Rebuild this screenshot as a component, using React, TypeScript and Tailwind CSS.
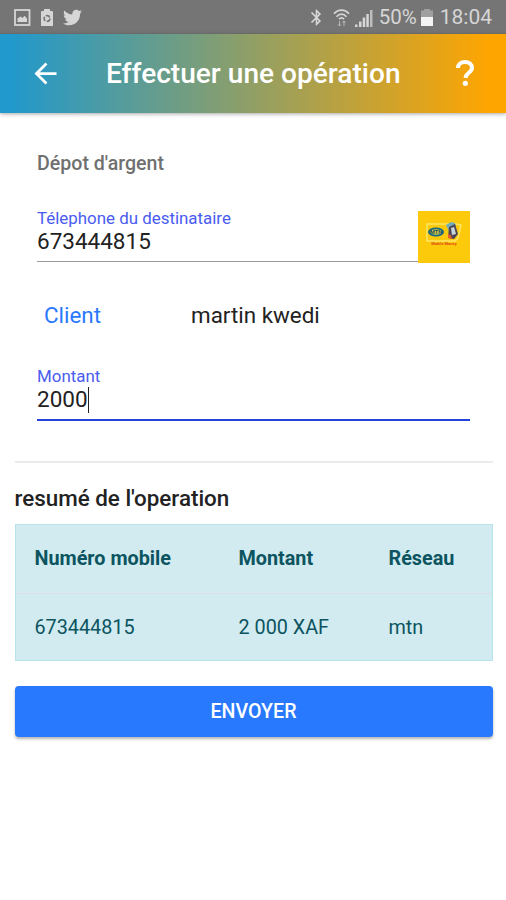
import { FaTwitter } from "react-icons/fa";
import { MdArrowBack, MdBluetooth } from "react-icons/md";

interface Operation {
  phone: string;
  amount: string;
  network: string;
}

const operations: Operation[] = [
  { phone: "673444815", amount: "2 000 XAF", network: "mtn" },
];

function StatusBar() {
  return (
    <div className="flex h-[34px] items-center justify-between bg-[#757575] pt-px pr-[14px] pl-[14px] text-[#d6d6d6]">
      <div className="flex items-center">
        <svg width="17" height="17" viewBox="0 0 17 17" fill="none">
          <rect x="1" y="1" width="14.5" height="15" stroke="currentColor" strokeWidth="1.8" />
          <path d="M3.5 13V9.5l3-2 2 1.5 2-2.2 2.500 2.700V13z" fill="currentColor" />
        </svg>
        <svg className="ml-[10px]" width="12" height="17" viewBox="0 0 12 17">
          <path d="M3 0h6v2h2.2l.8.8V17H0V2.8L.8 2H3z" fill="currentColor" />
          <circle cx="6" cy="9.5" r="2.9" fill="none" stroke="#757575" strokeWidth="1.6" strokeDasharray="4.6 1.47" />
        </svg>
        <FaTwitter className="ml-[10px]" size={19} />
      </div>
      <div className="flex items-center">
        <MdBluetooth size={19} />
        <svg className="ml-[7px]" width="17" height="18" viewBox="0 0 17 18" fill="none" stroke="currentColor" strokeWidth="1.7">
          <path d="M1 4.800C5-.2 12-.2 16 4.800M3.500 7.700c3-3.400 7-3.400 10 0M6 10.200c1.500-1.500 3.500-1.500 5 0" />
          <path d="M6.500 12v5M5 15.500 6.500 17 8 15.500M11 17v-5M9.500 13.500 11 12l1.500 1.500" strokeWidth="1" opacity=".7" />
        </svg>
        <svg className="ml-[5px]" width="18" height="18" viewBox="0 0 18 18" fill="currentColor">
          <path d="M0 15.500h2.500V18H0zM4 12.500h2.500V18H4zM7.700 8.500h2.500V18H7.700zM11.300 5h2.500v13h-2.500z" />
          <path d="M15 1h2.500v17H15z" opacity=".75" />
        </svg>
        <span className="ml-[6px] text-[20.5px] leading-[33px]">50%</span>
        <svg className="ml-[4px]" width="12" height="17" viewBox="0 0 12 17">
          <path d="M3 0h6v1.500h3V8H0V1.500h3z" fill="#a0a0a0" />
          <path d="M0 8h12v9H0z" fill="#f4f4f4" />
        </svg>
        <span className="ml-[7px] text-[21px] leading-[33px]">18:04</span>
      </div>
    </div>
  );
}

function Header() {
  return (
    <header className="flex h-[79px] items-center bg-[linear-gradient(to_right,#2199cc_2%,#ffa500_97%)] pl-[29px] text-white shadow-[0_1px_4px_rgba(0,0,0,0.35)]">
      <MdArrowBack size={33} />
      <h1 className="ml-[44px] text-[28.1px] leading-[36px] font-medium whitespace-nowrap">
        Effectuer une opération
      </h1>
      <svg className="mr-[32px] -mt-[2px] ml-auto" width="18" height="26" viewBox="0 0 18 26" fill="none">
        <path
          d="M2 8C2 4 5 2 9 2s7 2.300 7 6c0 4.500-6 4.500-6.500 10"
          stroke="currentColor"
          strokeWidth="4"
        />
        <circle cx="9.3" cy="23.3" r="2.6" fill="currentColor" />
      </svg>
    </header>
  );
}

function OperatorLogo() {
  return (
    <svg width="52" height="52" viewBox="0 0 52 52">
      <rect width="52" height="52" fill="#fdca0b" />
      <path d="M9 13h29l5 1-3 13-3 3H9z" fill="#fdca0b" stroke="#ffe566" strokeWidth="1.5" />
      <ellipse cx="18" cy="21" rx="8" ry="4.5" fill="#176a87" />
      <ellipse cx="18" cy="21" rx="6" ry="2.8" fill="#e0cb3c" />
      <text x="18" y="23" textAnchor="middle" fontSize="5.5" fontWeight="700" fill="#174e67">MTN</text>
      <path d="m28 14 5-3 4 1 1 5-7 3z" fill="#70adb8" />
      <path d="m31 16 6-3 3 10-4 5-6-1z" fill="#4c4555" />
      <path d="m33 17 3-1 2 7-4 1z" fill="#c9d6dc" />
      <path d="m30 23 3 1 1 4-4-1z" fill="#e1602d" />
      <text x="26" y="34" textAnchor="middle" fontSize="4" fontWeight="700" fill="#df4617">Mobile Money</text>
    </svg>
  );
}

export default function App() {
  return (
    <div className="min-h-[900px] w-[506px] bg-white font-[Roboto,sans-serif] text-[#222]">
      <StatusBar />
      <Header />

      <main className="pr-[13.5px] pl-[14.5px]">
        <section className="px-[22.5px] pt-[37px]">
          <h2 className="text-[19.6px] leading-[28px] font-medium text-[#707070]">Dépot d'argent</h2>

          <div className="mt-[33px] flex h-[52px] items-start">
            <div className="h-[51px] flex-1 border-b border-[#9a9a9a]">
              <p className="-mt-[3px] text-[16.9px] leading-[20px] text-[#4a5cf0]">Télephone du destinataire</p>
              <p className="text-[22.5px] leading-[27px]">673444815</p>
            </div>
            <OperatorLogo />
          </div>

          <div className="mt-[37px] flex pl-[7px] text-[22.4px] leading-[30px]">
            <span className="w-[147px] text-[#2979ff]">Client</span>
            <span>martin kwedi</span>
          </div>

          <div className="mt-[36px] h-[55px] border-b-2 border-[#2343dc]">
            <p className="text-[16.9px] leading-[20px] text-[#4a5cf0]">Montant</p>
            <div className="flex items-center">
              <span className="text-[22.5px] leading-[27px]">2000</span>
              <span className="h-[26px] w-px bg-[#222]" />
            </div>
          </div>
        </section>

        <hr className="mt-[40px] border-t-2 border-[#ebebeb]" />

        <h3 className="mt-[20px] text-[22.4px] leading-[30px] font-medium">resumé de l'operation</h3>

        <div className="mt-[11px] h-[137px] border border-[#b8e3ea] bg-[#d1ebf0] text-[19.8px] leading-[26px] text-[#0c5460]">
          <div className="grid h-[69px] grid-cols-[204px_150px_1fr] items-center border-b border-[#dcdfe8] pb-px pl-[19px] font-bold">
            <span>Numéro mobile</span>
            <span>Montant</span>
            <span>Réseau</span>
          </div>
          {operations.map((op) => (
            <div key={op.phone} className="grid h-[67px] grid-cols-[204px_150px_1fr] items-center pl-[19px]">
              <span>{op.phone}</span>
              <span>{op.amount}</span>
              <span>{op.network}</span>
            </div>
          ))}
        </div>

        <button className="mt-[25px] block h-[51px] w-full rounded-[4px] bg-[#2979ff] pt-px text-[19.6px] font-medium text-white shadow-[0_2px_3px_rgba(0,0,0,0.3)]">
          ENVOYER
        </button>
      </main>
    </div>
  );
}
